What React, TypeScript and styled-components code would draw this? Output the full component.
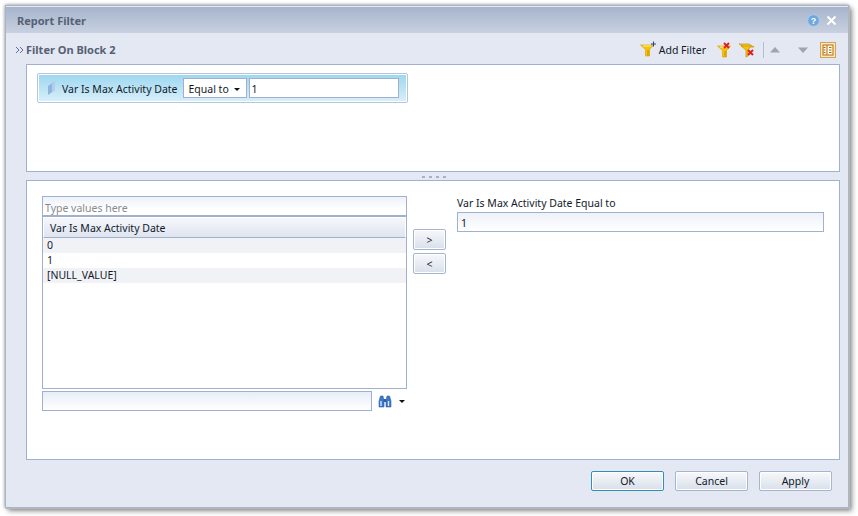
import React from "react";
import styled, { createGlobalStyle } from "styled-components";

const Global = createGlobalStyle`
  html, body { margin: 0; padding: 0; background: #ffffff; }
  body { font-family: "Noto Sans", "Liberation Sans", sans-serif; font-size: 11px; color: #111a2a; }
  * { box-sizing: border-box; }
`;

const Page = styled.div`
  width: 858px;
  height: 516px;
  padding: 5px 0 0 5px;
  overflow: hidden;
`;

const Win = styled.div`
  width: 844px;
  height: 503px;
  display: flex;
  flex-direction: column;
  background: #e4e8f2;
  border: 1px solid #a7b4ca;
  box-shadow: 1px 1px 0 #b8b8b8, 3px 3px 5px rgba(0, 0, 0, 0.45), -1px 0 3px rgba(0, 0, 0, 0.18), 0 -1px 3px rgba(0, 0, 0, 0.18);
`;

const TitleBar = styled.div`
  height: 26px;
  flex: none;
  margin-top: 1px;
  padding: 0 11px 0 11px;
  display: flex;
  align-items: center;
  justify-content: space-between;
  background: linear-gradient(#a6b4cc, #c8d1e0);
`;

const TitleText = styled.span`
  font-weight: 700;
  font-size: 11px;
  color: #566176;
`;

const TitleIcons = styled.div`
  display: flex;
  align-items: center;
  gap: 6px;
`;

const Header = styled.div`
  height: 31px;
  flex: none;
  display: flex;
  align-items: center;
  justify-content: space-between;
  padding: 2px 12px 0 9px;
`;

const HeaderTitle = styled.div`
  display: flex;
  align-items: center;
  gap: 2px;
  font-weight: 700;
  font-size: 11px;
  color: #566176;
`;

const Tools = styled.div`
  display: flex;
  align-items: center;
`;

const ToolLabel = styled.span`
  font-size: 10.5px;
  margin: 0 11px 0 2px;
  color: #111a2a;
`;

const ToolSep = styled.span`
  width: 1px;
  height: 16px;
  background: #b4bfd2;
  margin: 0 6px 0 7px;
`;

const Content = styled.div`
  flex: 1;
  display: flex;
  flex-direction: column;
  padding: 0 8px 0 20px;
`;

const Panel = styled.div<{ $h: number }>`
  height: ${(p) => p.$h}px;
  flex: none;
  background: #fff;
  border: 1px solid #9fb1ce;
`;

const TopPanel = styled(Panel)`
  padding: 8px 0 0 10px;
`;

const Chip = styled.div`
  width: 371px;
  height: 30px;
  display: flex;
  align-items: center;
  padding: 0 8px 0 9px;
  border: 1px solid #b3c6dc;
  border-radius: 2px;
  box-shadow: inset 0 0 0 1px #fff;
  background: linear-gradient(#9bd6f0, #d9f0fa);
`;

const ChipLabel = styled.span`
  font-size: 10.5px;
  margin: 2px 5px 0 6px;
  white-space: nowrap;
`;

const Select = styled.div`
  width: 64px;
  height: 20px;
  flex: none;
  display: flex;
  align-items: center;
  justify-content: space-between;
  padding: 2px 6px 0 5px;
  background: #fff;
  border: 1px solid #9fb1ce;
  font-size: 10.5px;
`;

const Caret = styled.span`
  width: 0;
  height: 0;
  border-left: 3px solid transparent;
  border-right: 3px solid transparent;
  border-top: 3px solid #111;
`;

const ChipInput = styled.div`
  flex: 1;
  height: 20px;
  margin-left: 2px;
  padding: 3px 0 0 2px;
  background: #fff;
  border: 1px solid #9fb1ce;
  font-size: 10.5px;
`;

const Splitter = styled.div`
  height: 8px;
  flex: none;
  display: flex;
  align-items: center;
  justify-content: center;
  gap: 4px;
  padding-top: 2px;
  padding-left: 1px;
`;

const Grip = styled.span`
  width: 3px;
  height: 2px;
  background: #a8b2c3;
`;

const BottomPanel = styled(Panel)`
  display: flex;
  padding: 15px 15px 0 15px;
`;

const Left = styled.div`
  width: 365px;
  flex: none;
  display: flex;
  flex-direction: column;
`;

const TypeInput = styled.div`
  height: 21px;
  flex: none;
  padding: 4px 0 0 2px;
  border: 1px solid #9fb1ce;
  border-bottom-width: 2px;
  background: linear-gradient(#eef1f8, #fff 70%);
  color: #8a8a8a;
  font-size: 10.5px;
`;

const List = styled.div`
  height: 172px;
  flex: none;
  border: 1px solid #9fb1ce;
  border-top: none;
  display: flex;
  flex-direction: column;
`;

const ListHead = styled.div`
  height: 21px;
  flex: none;
  padding: 3px 0 0 6px;
  border: 1px solid #fff;
  border-bottom: 1px solid #9fb1ce;
  background: linear-gradient(#f6f7fb, #dfe4ef);
  font-size: 10.5px;
`;

const Row = styled.div<{ $alt?: boolean }>`
  height: 15px;
  flex: none;
  padding-left: 4px;
  line-height: 14px;
  font-size: 10.5px;
  background: ${(p) => (p.$alt ? "#f1f2f6" : "#fff")};
`;

const SearchRow = styled.div`
  display: flex;
  align-items: center;
  margin-top: 2px;
`;

const SearchInput = styled.div`
  width: 330px;
  height: 20px;
  flex: none;
  border: 1px solid #9fb1ce;
  background: linear-gradient(#e8edf6, #fff);
`;

const SearchCaret = styled(Caret)`
  margin-left: 7px;
`;

const Mover = styled.div`
  width: 33px;
  flex: none;
  margin: 33px 0 0 6px;
  display: flex;
  flex-direction: column;
  gap: 3px;
`;

const Btn = styled.div<{ $w: number; $h: number; $def?: boolean }>`
  width: ${(p) => p.$w}px;
  height: ${(p) => p.$h}px;
  flex: none;
  display: flex;
  align-items: center;
  justify-content: center;
  border: 1px solid ${(p) => (p.$def ? "#2f8fb8" : "#a4b5d0")};
  border-radius: 2px;
  box-shadow: inset 0 0 0 1px #fff;
  background: linear-gradient(#f7f8fb, #d9dfea);
  font-size: 10.5px;
  color: #111a2a;
`;

const Right = styled.div`
  width: 367px;
  flex: none;
  margin-left: 11px;
  display: flex;
  flex-direction: column;
`;

const RightLabel = styled.div`
  height: 16px;
  font-size: 10.5px;
  line-height: 14px;
`;

const RightInput = styled.div`
  height: 20px;
  padding: 3px 0 0 3px;
  border: 1px solid #9fb1ce;
  background: linear-gradient(#eef1f8, #fff);
  font-size: 10.5px;
`;

const Footer = styled.div`
  flex: 1;
  display: flex;
  justify-content: flex-end;
  gap: 11px;
  padding: 11px 8px 0 0;
`;

const Funnel = () => (
  <g>
    <path d="M0.5 4h13L9.5 8.5V15h-4V8.5z" fill="#f6c400" stroke="#d9a000" strokeWidth="0.6" />
    <path d="M5 6h5M7 9h2.5V15H7z" stroke="none" fill="#e2a400" />
    <path d="M3 5h8" stroke="#fff0a0" strokeWidth="1" />
  </g>
);

const RedX = ({ x, y }: { x: number; y: number }) => (
  <path d={`M${x} ${y}l5 5m0-5l-5 5`} stroke="#e0201c" strokeWidth="2" fill="none" />
);

const App = () => (
  <Page>
    <Global />
    <Win>
      <TitleBar>
        <TitleText>Report Filter</TitleText>
        <TitleIcons>
          <svg width="13" height="13" viewBox="0 0 13 13">
            <circle cx="6.5" cy="6.5" r="5.8" fill="#6ea7dc" stroke="#a9cdf0" />
            <text x="6.5" y="10" textAnchor="middle" fontSize="9" fontWeight="700" fontFamily="Liberation Sans" fill="#fff">?</text>
          </svg>
          <svg width="11" height="11" viewBox="0 0 11 11">
            <path d="M1.5 1.5l8 8m0-8l-8 8" stroke="#fff" strokeWidth="2" />
          </svg>
        </TitleIcons>
      </TitleBar>
      <Header>
        <HeaderTitle>
          <svg width="9" height="8" viewBox="0 0 9 8">
            <path d="M1 1l3 3-3 3M5 1l3 3-3 3" stroke="#5d6f93" fill="none" />
          </svg>
          Filter On Block 2
        </HeaderTitle>
        <Tools>
          <svg width="17" height="17" viewBox="0 0 17 17">
            <Funnel />
            <path d="M11 3h5M13.5 0.5v5" stroke="#27477f" strokeWidth="1" />
          </svg>
          <ToolLabel>Add Filter</ToolLabel>
          <svg width="15" height="16" viewBox="0 0 15 16">
            <Funnel />
            <RedX x={7} y={1} />
          </svg>
          <svg width="18" height="16" viewBox="0 0 18 16" style={{ marginLeft: 6 }}>
            <path d="M1 2h10l5 3H6z" fill="#f3c63a" stroke="#c98f00" strokeWidth="0.7" />
            <path d="M3 4h10l-3 4v6l-2 1V8z" fill="#f6c400" stroke="#c98f00" strokeWidth="0.7" />
            <RedX x={10} y={8} />
          </svg>
          <ToolSep />
          <svg width="10" height="6" viewBox="0 0 10 6">
            <path d="M5 0l5 5.5H0z" fill="#9ea5b1" />
          </svg>
          <svg width="10" height="6" viewBox="0 0 10 6" style={{ marginLeft: 18 }}>
            <path d="M5 6L0 .5h10z" fill="#9ea5b1" />
          </svg>
          <svg width="16" height="16" viewBox="0 0 16 16" style={{ marginLeft: 12 }}>
            <rect x="0.5" y="0.5" width="15" height="15" fill="#f7e9c4" stroke="#d9a24a" />
            <rect x="3" y="3" width="10" height="10" fill="#fff8e6" stroke="#b36b10" />
            <path d="M7 3v10M3.5 5.5h2M3.5 8h2M3.5 10.5h2M9 5.5h2.5M9 8h2.5M9 10.5h2.5" stroke="#b36b10" />
          </svg>
        </Tools>
      </Header>
      <Content>
        <TopPanel $h={108}>
          <Chip>
            <svg width="9" height="14" viewBox="0 0 9 14">
              <path d="M1 5l7-5v9l-7 5z" fill="#8fb4e0" />
              <path d="M5 2.5L8 0v9l-3 2.5z" fill="#b3cdea" />
            </svg>
            <ChipLabel>Var Is Max Activity Date</ChipLabel>
            <Select>
              Equal to
              <Caret />
            </Select>
            <ChipInput>1</ChipInput>
          </Chip>
        </TopPanel>
        <Splitter>
          <Grip />
          <Grip />
          <Grip />
          <Grip />
        </Splitter>
        <BottomPanel $h={280}>
          <Left>
            <TypeInput>Type values here</TypeInput>
            <List>
              <ListHead>Var Is Max Activity Date</ListHead>
              <Row $alt>0</Row>
              <Row>1</Row>
              <Row $alt>[NULL_VALUE]</Row>
            </List>
            <SearchRow>
              <SearchInput />
              <svg width="14" height="14" viewBox="0 0 14 14" style={{ marginLeft: 6 }}>
                <path d="M1 13V7l1.5-5h2.5L6 7v6zM8 13V7l1-5h2.5L13 7v6z" fill="#3b78c8" stroke="#2a62b0" strokeWidth="0.6" />
                <path d="M3 7v5M10.5 7v5" stroke="#d6e6fa" strokeWidth="1.4" />
                <path d="M5.5 5h3v3h-3z" fill="#2a62b0" />
              </svg>
              <SearchCaret />
            </SearchRow>
          </Left>
          <Mover>
            <Btn $w={33} $h={21}>&gt;</Btn>
            <Btn $w={33} $h={21}>&lt;</Btn>
          </Mover>
          <Right>
            <RightLabel>Var Is Max Activity Date Equal to</RightLabel>
            <RightInput>1</RightInput>
          </Right>
        </BottomPanel>
        <Footer>
          <Btn $w={73} $h={20} $def>OK</Btn>
          <Btn $w={73} $h={20}>Cancel</Btn>
          <Btn $w={73} $h={20}>Apply</Btn>
        </Footer>
      </Content>
    </Win>
  </Page>
);

export default App;
